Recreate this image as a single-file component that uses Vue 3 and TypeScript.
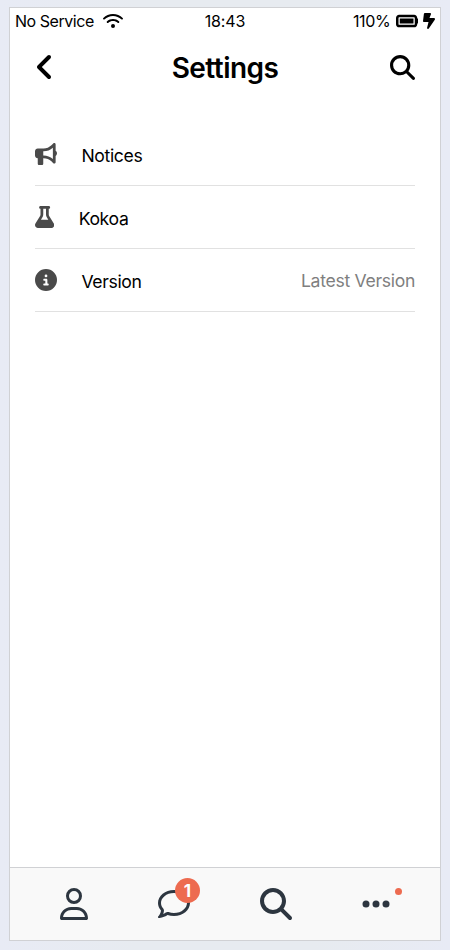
<script setup lang="ts">
interface Row { id: string; label: string; width: number; icon: string; viewBox: string; note?: string }

const searchPath = 'M416 208c0 45.9-14.9 88.3-40 122.7L502.6 457.4c12.5 12.5 12.5 32.8 0 45.3s-32.8 12.5-45.3 0L330.7 376c-34.4 25.2-76.8 40-122.7 40C93.1 416 0 322.9 0 208S93.1 0 208 0S416 93.1 416 208zM208 352a144 144 0 1 0 0-288 144 144 0 1 0 0 288z'

const rows: Row[] = [
  {
    id: 'notices', label: 'Notices', width: 22, viewBox: '0 0 512 512',
    icon: 'M480 32c0-12.9-7.8-24.6-19.8-29.6s-25.7-2.2-34.9 6.9L381.7 53c-48 48-113.1 75-181 75H192 160 64c-35.3 0-64 28.7-64 64v96c0 35.3 28.7 64 64 64l0 128c0 17.7 14.3 32 32 32h64c17.7 0 32-14.3 32-32V352l8.7 0c67.9 0 133 27 181 75l43.6 43.6c9.2 9.2 22.9 11.9 34.9 6.9s19.8-16.6 19.8-29.6V300.4c18.6-8.8 32-32.5 32-60.4s-13.4-51.6-32-60.4V32zm-64 76.7V240 371.3C357.2 317.8 280.5 288 200.7 288H192V192h8.7c79.8 0 156.5-29.8 215.3-83.3z',
  },
  {
    id: 'kokoa', label: 'Kokoa', width: 19.25, viewBox: '0 0 448 512',
    icon: 'M288 0H160 128C110.3 0 96 14.3 96 32s14.3 32 32 32V196.8c0 11.8-3.3 23.5-9.5 33.5L10.3 406.2C3.6 417.2 0 429.7 0 442.6C0 480.9 31.1 512 69.4 512H378.6c38.3 0 69.4-31.1 69.4-69.4c0-12.8-3.6-25.4-10.3-36.4L329.5 230.4c-6.2-10.1-9.5-21.7-9.5-33.5V64c17.7 0 32-14.3 32-32s-14.3-32-32-32H288zM192 196.8V64h64V196.8c0 23.7 6.6 46.9 19 67.1L309.5 320h-171L173 263.9c12.4-20.2 19-43.4 19-67.1z',
  },
  {
    id: 'version', label: 'Version', width: 22, viewBox: '0 0 512 512', note: 'Latest Version',
    icon: 'M256 512A256 256 0 1 0 256 0a256 256 0 1 0 0 512zM216 336h24V272H216c-13.3 0-24-10.7-24-24s10.7-24 24-24h48c13.3 0 24 10.7 24 24v88h8c13.3 0 24 10.7 24 24s-10.7 24-24 24H216c-13.3 0-24-10.7-24-24s10.7-24 24-24zm40-208a32 32 0 1 1 0 64 32 32 0 1 1 0-64z',
  },
]
</script>

<template>
  <div class="page">
    <main class="phone">
      <div class="status">
        <div class="status-side">
          <span class="carrier">No Service</span>
          <svg width="20" height="16" viewBox="0 0 640 512"><path d="M54.2 202.9C123.2 136.7 216.8 96 320 96s196.8 40.7 265.8 106.9c12.8 12.2 33 11.8 45.2-.9s11.8-33-.9-45.2C549.7 79.5 440.4 32 320 32S90.3 79.5 9.8 156.7C-2.9 169-3.3 189.2 8.9 202s32.5 13.2 45.2 .9zM320 256c56.8 0 108.6 21.1 148.2 56c13.3 11.7 33.5 10.4 45.2-2.8s10.4-33.5-2.8-45.2C459.8 219.2 393 192 320 192s-139.8 27.2-190.5 72c-13.3 11.7-14.5 31.9-2.8 45.2s31.9 14.5 45.2 2.8c39.5-34.9 91.3-56 148.2-56zm64 160a64 64 0 1 0-128 0 64 64 0 1 0 128 0z" /></svg>
        </div>
        <span class="clock">18:43</span>
        <div class="status-side right">
          <span class="percent">110%</span>
          <svg width="22.5" height="20" viewBox="0 0 576 512"><path d="M464 160c8.8 0 16 7.2 16 16V336c0 8.8-7.2 16-16 16H80c-8.8 0-16-7.2-16-16V176c0-8.8 7.2-16 16-16H464zM80 96C35.8 96 0 131.8 0 176V336c0 44.2 35.8 80 80 80H464c44.2 0 80-35.8 80-80V320c17.7 0 32-14.3 32-32V224c0-17.7-14.3-32-32-32V176c0-44.2-35.8-80-80-80H80zm368 96H96V320H448V192z" /></svg>
          <svg width="12" height="16" viewBox="0 0 384 512"><path d="M0 256L28.5 28c2-16 15.6-28 31.8-28H228.9c15 0 27.1 12.1 27.1 27.1c0 3.2-.6 6.5-1.7 9.5L208 160H347.3c20.2 0 36.7 16.4 36.7 36.7c0 7.4-2.2 14.6-6.4 20.7l-192.2 281c-5.9 8.6-15.6 13.7-25.9 13.7h-2.9c-15.7 0-28.5-12.8-28.5-28.5c0-2.3 .3-4.6 .9-6.9L176 288H32c-17.7 0-32-14.3-32-32z" /></svg>
        </div>
      </div>

      <header class="header">
        <svg class="back" width="20" height="32" viewBox="0 0 320 512"><path d="M41.4 233.4c-12.5 12.5-12.5 32.8 0 45.3l160 160c12.5 12.5 32.8 12.5 45.3 0s12.5-32.8 0-45.3L109.3 256 246.6 118.6c12.5-12.5 12.5-32.8 0-45.3s-32.8-12.5-45.3 0l-160 160z" /></svg>
        <h1>Settings</h1>
        <svg class="find" width="25" height="25" viewBox="0 0 512 512"><path :d="searchPath" /></svg>
      </header>

      <section class="rows">
        <div v-for="row in rows" :key="row.id" class="row">
          <svg :width="row.width" height="22" :viewBox="row.viewBox"><path :d="row.icon" /></svg>
          <span class="label">{{ row.label }}</span>
          <span v-if="row.note" class="note">{{ row.note }}</span>
        </div>
      </section>

      <nav class="nav">
        <a class="tab"><svg width="28" height="32" viewBox="0 0 448 512"><path d="M304 128a80 80 0 1 0-160 0 80 80 0 1 0 160 0zM96 128a128 128 0 1 1 256 0A128 128 0 1 1 96 128zM49.3 464H398.7c-8.9-63.3-63.3-112-129-112H178.3c-65.7 0-120.1 48.7-129 112zM0 482.3C0 383.8 79.8 304 178.3 304h91.4C368.2 304 448 383.8 448 482.3c0 16.4-13.3 29.7-29.7 29.7H29.7C13.3 512 0 498.7 0 482.3z" /></svg></a>
        <a class="tab">
          <svg width="32" height="32" viewBox="0 0 512 512"><path d="M123.6 391.3c12.9-9.4 29.6-11.8 44.6-6.4c26.5 9.6 56.2 15.1 87.8 15.1c124.7 0 208-80.5 208-160s-83.3-160-208-160S48 160.5 48 240c0 32 12.4 62.8 35.7 89.2c8.6 9.7 12.8 22.5 11.8 35.5c-1.4 18.1-5.7 34.7-11.3 49.4c17-7.9 31.1-16.7 39.4-22.7zM21.2 431.9c1.8-2.7 3.5-5.4 5.1-8.1c10-16.6 19.5-38.4 21.4-62.9C17.7 326.8 0 285.1 0 240C0 125.1 114.6 32 256 32s256 93.1 256 208s-114.6 208-256 208c-37.1 0-72.3-6.4-104.1-17.9c-11.9 8.7-31.3 20.6-54.3 30.6c-15.1 6.6-32.3 12.6-50.1 16.1c-.8 .2-1.6 .3-2.4 .5c-4.4 .8-8.7 1.5-13.2 1.9c-.2 0-.5 .1-.7 .1c-5.1 .5-10.2 .8-15.3 .8c-6.5 0-12.3-3.9-14.8-9.9c-2.5-6-1.1-12.8 3.4-17.4c4.1-4.2 7.8-8.7 11.3-13.5c1.7-2.3 3.3-4.6 4.8-6.9z" /></svg>
          <span class="badge">1</span>
        </a>
        <a class="tab"><svg width="32" height="32" viewBox="0 0 512 512"><path :d="searchPath" /></svg></a>
        <a class="tab">
          <svg width="28" height="32" viewBox="0 0 448 512"><circle cx="64" cy="256" r="56" /><circle cx="224" cy="256" r="56" /><circle cx="384" cy="256" r="56" /></svg>
          <span class="dot"></span>
        </a>
      </nav>
    </main>
  </div>
</template>

<style>
body { background: #e8ebf2; }
</style>

<style scoped>
.page {
  box-sizing: border-box;
  height: 950px;
  padding: 7px 9px 9px;
  background: linear-gradient(90deg, #e8ebf5, #e7ebf0 30%, #e7ebf0 70%, #e8ebf5);
  font-family: Inter, "Liberation Sans", sans-serif;
  color: #000;
}
svg { display: block; flex: none; fill: currentColor; }
.phone {
  box-sizing: border-box;
  width: 432px;
  height: 934px;
  display: flex;
  flex-direction: column;
  border: 1px solid #d0d1d4;
  background: #fff;
}
.status {
  display: grid;
  grid-template-columns: 1fr auto 1fr;
  align-items: center;
  height: 26px;
  padding: 0 5px;
  font-size: 16px;
  line-height: 20px;
}
.status-side { display: flex; align-items: center; }
.status-side.right { justify-content: flex-end; gap: 5px; }
.carrier { width: 88px; letter-spacing: -0.45px; white-space: nowrap; }
.clock { letter-spacing: -0.1px; }
.percent { letter-spacing: -0.3px; }
.header {
  display: grid;
  grid-template-columns: 1fr auto 1fr;
  align-items: center;
  height: 66px;
  padding: 0 25px;
}
h1 { margin: 2px 0 0; font-size: 28px; line-height: 34px; font-weight: 600; letter-spacing: -0.55px; }
.find { justify-self: end; }
.rows { flex: 1; padding: 23px 25px 0; }
.row {
  box-sizing: border-box;
  display: flex;
  align-items: center;
  height: 63px;
  border-bottom: 1px solid #e1e1e1;
  font-size: 17.6px;
  line-height: 22px;
}
.row svg { color: #4a4a4a; }
.label { margin: 3px 0 0 24.4px; letter-spacing: -0.35px; }
.note { margin: 1px 0 0 auto; color: #7f7f7f; letter-spacing: -0.3px; }
.nav {
  box-sizing: border-box;
  display: flex;
  justify-content: space-between;
  height: 73px;
  padding: 0 50px;
  border-top: 1px solid #d0d1d4;
  background: #f9f9f9;
  color: #2d3640;
}
.tab { position: relative; display: flex; align-items: center; }
.badge {
  position: absolute;
  top: 10px;
  left: 17px;
  width: 25px;
  height: 25px;
  border-radius: 50%;
  background: #ed6b50;
  color: #fff;
  font-size: 17px;
  line-height: 26px;
  font-weight: 700;
  text-align: center;
}
.dot {
  position: absolute;
  top: 20px;
  left: 35px;
  width: 7px;
  height: 7px;
  margin-left: -2px;
  border-radius: 50%;
  background: #ed6b50;
}
</style>
